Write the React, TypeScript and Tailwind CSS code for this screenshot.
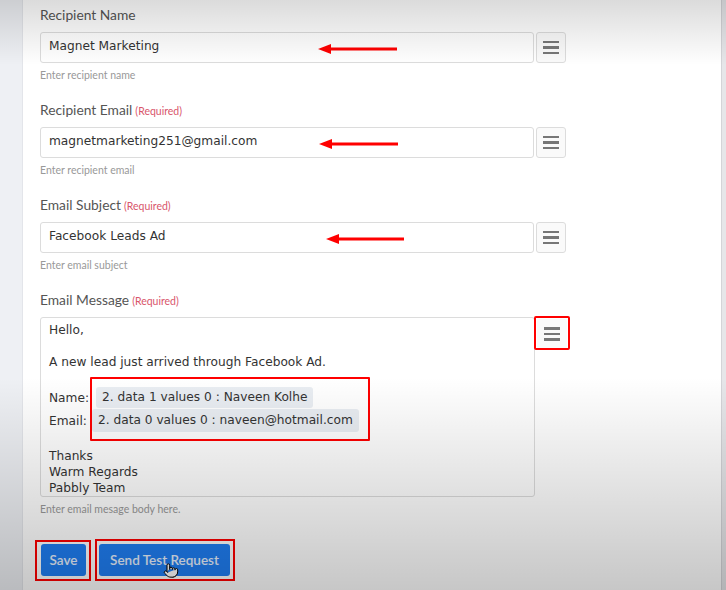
import { Pointer } from 'lucide-react';

function Hamburger() {
  return (
    <div className="flex flex-col gap-[3px] w-[16px]">
      <span className="block h-[2.5px] bg-[#777]" />
      <span className="block h-[2.5px] bg-[#777]" />
      <span className="block h-[2.5px] bg-[#777]" />
    </div>
  );
}

function Arrow({ width }: { width: number }) {
  return (
    <svg width={width} height="12" viewBox={`0 0 ${width} 12`} className="block">
      <line x1="8" y1="6" x2={width} y2="6" stroke="#ff0000" strokeWidth="3" />
      <polygon points="0,6 13,1 13,11" fill="#ff0000" />
    </svg>
  );
}

function Label({ text, required }: { text: string; required?: boolean }) {
  return (
    <div className="h-[18px] leading-[18px] text-[13.8px] text-[#555] font-['Lato',sans-serif] mb-[8px]">
      {text}
      {required && <span className="text-[10.5px] text-[#d9566b] ml-[3px]">(Required)</span>}
    </div>
  );
}

function Help({ text }: { text: string }) {
  return (
    <div className="mt-[6px] h-[12px] leading-[12px] text-[10.5px] text-[#999] font-['Lato',sans-serif]">{text}</div>
  );
}

function InputField({
  label,
  value,
  help,
  required,
  arrowLeft,
  arrowWidth,
}: {
  label: string;
  value: string;
  help: string;
  required?: boolean;
  arrowLeft: number;
  arrowWidth: number;
}) {
  return (
    <div className="mb-[20px]">
      <Label text={label} required={required} />
      <div className="flex gap-[2px]">
        <div className="relative w-[494px] h-[31px] border border-[#dcdcdc] rounded-[3px] bg-white flex items-center pl-[8px] pb-[3px] text-[12.2px] text-[#333] font-['DejaVu_Sans',sans-serif]">
          {value}
          <div className="absolute top-[10px]" style={{ left: arrowLeft }}>
            <Arrow width={arrowWidth} />
          </div>
        </div>
        <div className="w-[30px] h-[31px] border border-[#dcdcdc] rounded-[3px] bg-[#fafafa] flex items-center justify-center">
          <Hamburger />
        </div>
      </div>
      <Help text={help} />
    </div>
  );
}

export default function App() {
  return (
    <div className="relative w-[726px] h-[590px] overflow-hidden flex bg-white">
      <div className="w-[23px] bg-[#eef0f4] border-r border-[#e3e5ea]" />
      <main className="flex-1 pl-[17px] pt-[6px]">
        <InputField label="Recipient Name" value="Magnet Marketing" help="Enter recipient name" arrowLeft={277} arrowWidth={79} />
        <InputField
          label="Recipient Email"
          required
          value="magnetmarketing251@gmail.com"
          help="Enter recipient email"
          arrowLeft={278}
          arrowWidth={79}
        />
        <InputField
          label="Email Subject"
          required
          value="Facebook Leads Ad"
          help="Enter email subject"
          arrowLeft={285}
          arrowWidth={78}
        />

        <Label text="Email Message" required />
        <div className="flex gap-[2px] items-start">
          <div className="relative w-[495px] h-[180px] border border-[#dcdcdc] rounded-[3px] bg-white pl-[8px] pt-[4px] text-[12.2px] leading-[16px] text-[#333] font-['DejaVu_Sans',sans-serif]">
            <div>Hello,</div>
            <div className="mt-[16px]">A new lead just arrived through Facebook Ad.</div>
            <div className="mt-[16px] h-[23px] flex items-center">
              Name:
              <span className="ml-[7px] bg-[#e9edf2] rounded-[3px] px-[6px] h-[21px] leading-[21px]">2. data 1 values 0 : Naveen Kolhe</span>
            </div>
            <div className="h-[23px] flex items-center">
              Email:
              <span className="ml-[5px] bg-[#e9edf2] rounded-[3px] px-[6px] h-[23px] leading-[23px]">2. data 0 values 0 : naveen@hotmail.com</span>
            </div>
            <div className="mt-[16px]">Thanks</div>
            <div>Warm Regards</div>
            <div>Pabbly Team</div>
            <div className="absolute left-[49px] top-[59px] w-[280px] h-[64px] border-2 border-[#ff0000] rounded-[1px]" />
          </div>
          <div className="relative mt-[2px] w-[30px] h-[30px] bg-[#fafafa] rounded-[3px] flex items-center justify-center">
            <Hamburger />
            <div className="absolute -left-[3px] -top-[3px] w-[36px] h-[34px] border-2 border-[#ff0000] rounded-[2px]" />
          </div>
        </div>
        <Help text="Enter email mesage body here." />

        <div className="mt-[29px] ml-[1px] flex gap-[13px] font-['Lato',sans-serif]">
          <div className="relative">
            <button className="w-[45px] h-[32px] rounded-[3px] bg-[#1f7ef3] text-white/90 text-[13.5px] font-semibold">Save</button>
            <div className="absolute -left-[6px] -top-[4px] w-[56px] h-[41px] border-2 border-[#ff0000]" />
          </div>
          <div className="relative">
            <button className="w-[131px] h-[32px] rounded-[3px] bg-[#1f7ef3] text-white/90 text-[13.5px] font-semibold">Send Test Request</button>
            <div className="absolute -left-[4px] -top-[5px] w-[140px] h-[42px] border-2 border-[#ff0000]" />
            <Pointer className="absolute left-[64px] top-[17px] w-[16px] h-[19px] text-black fill-white" strokeWidth={1.5} />
          </div>
        </div>
      </main>
      <div className="w-[5px] bg-[#e6e6e9] border-l border-[#d4d4d8]" />
      <div className="pointer-events-none absolute inset-0 bg-[linear-gradient(to_bottom,rgba(0,0,0,0.14),rgba(0,0,0,0)_11%,rgba(0,0,0,0)_64%,rgba(0,0,0,0.22))]" />
    </div>
  );
}
